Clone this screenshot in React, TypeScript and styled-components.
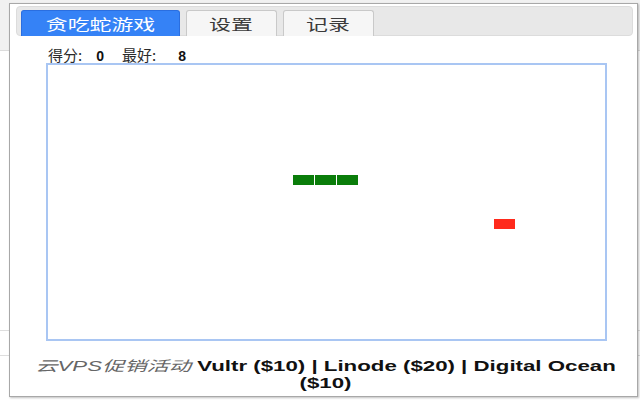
import React, { useState } from "react";
import styled, { createGlobalStyle } from "styled-components";

const Global = createGlobalStyle`
  html, body { margin: 0; padding: 0; }
  body {
    width: 640px;
    height: 400px;
    overflow: hidden;
    font-family: "Liberation Sans", Arial, "Noto Sans CJK SC", sans-serif;
    background: linear-gradient(to bottom, #f1f1f1 0 50px, #dcdcdc 50px 51px, #fff 51px 330px, #dedede 330px 331px, #fff 331px 355px, #dedede 355px 356px, #fff 356px);
  }
`;

const Page = styled.div`
  padding: 3px 0 0 9px;
`;

const Popup = styled.div`
  box-sizing: border-box;
  width: 629px;
  height: 394px;
  background: #fff;
  border: 1px solid #a8a8a8;
  box-shadow: 1px 1px 2px rgba(0, 0, 0, 0.25);
  padding: 2px 3px 0 6px;
  overflow: hidden;
`;

const TabBar = styled.div`
  box-sizing: border-box;
  height: 30px;
  width: 617px;
  background: #e8e8e8;
  border: 1px solid #dcdcdc;
  border-radius: 4px;
  display: flex;
  align-items: flex-end;
  gap: 6px;
  padding: 0 0 0 4px;
`;

const Tab = styled.button<{ $active?: boolean; $w: number }>`
  box-sizing: border-box;
  width: ${(p) => p.$w}px;
  height: 26px;
  margin: 0 0 -1px 0;
  border: 1px solid ${(p) => (p.$active ? "#2a6ee0" : "#c9c9c9")};
  border-bottom: none;
  border-radius: 3px 3px 0 0;
  background: ${(p) => (p.$active ? "#3582f6" : "#f6f6f6")};
  color: ${(p) => (p.$active ? "#fff" : "#3a3a3a")};
  font-family: "Noto Sans CJK SC", sans-serif;
  font-size: 15px;
  line-height: 24px;
  padding: 0;
  cursor: pointer;
  display: flex;
  align-items: center;
  justify-content: center;
`;

const WideText = styled.span<{ $k: number }>`
  display: inline-block;
  transform: scaleX(${(p) => p.$k});
  transform-origin: center;
`;

const Content = styled.div`
  padding: 11px 0 0 30px;
`;

const Score = styled.div`
  display: flex;
  align-items: baseline;
  height: 16px;
  font-family: "Noto Sans CJK SC", sans-serif;
  font-size: 15px;
  line-height: 16px;
  color: #2a2a2a;
  padding-left: 2px;
`;

const Label = styled.span`
  letter-spacing: 0px;
`;

const Num = styled.b<{ $ml: number; $mr?: number }>`
  font-family: "Liberation Sans", Arial, sans-serif;
  font-weight: bold;
  font-size: 14px;
  color: #111;
  margin: 0 ${(p) => p.$mr ?? 0}px 0 ${(p) => p.$ml}px;
`;

const Board = styled.div`
  box-sizing: border-box;
  width: 561px;
  height: 278px;
  border: 2px solid #a9c6f3;
  background: #fff;
  svg { display: block; }
`;

const Footer = styled.div`
  width: 385px;
  margin: 17px auto 0;
  text-align: center;
  font-size: 14px;
  line-height: 17px;
  color: #111;
  transform: scaleX(1.59);
  transform-origin: center;
`;

const Promo = styled.i`
  color: #666;
  font-family: "Liberation Sans", "Noto Sans CJK SC", sans-serif;
  font-size: 14px;
`;

const Links = styled.b`
  font-weight: bold;
`;

const cells = [
  { x: 245, y: 110 },
  { x: 267, y: 110 },
  { x: 289, y: 110 },
];

export default function App() {
  const [tab, setTab] = useState(0);
  const tabs = [
    { label: "贪吃蛇游戏", w: 159 },
    { label: "设置", w: 91 },
    { label: "记录", w: 91 },
  ];
  return (
    <>
      <Global />
      <Page>
        <Popup>
          <TabBar>
            {tabs.map((t, i) => (
              <Tab key={t.label} $w={t.w} $active={tab === i} onClick={() => setTab(i)}>
                <WideText $k={1.46}>{t.label}</WideText>
              </Tab>
            ))}
          </TabBar>
          <Content>
            <Score>
              <Label>得分:</Label>
              <Num $ml={14} $mr={18}>0</Num>
              <Label>最好:</Label>
              <Num $ml={22}>8</Num>
            </Score>
            <Board>
              <svg width="557" height="274" viewBox="0 0 557 274">
                {cells.map((c, i) => (
                  <rect key={i} x={c.x} y={c.y} width={21} height={10} fill="#0a7d0a" />
                ))}
                <rect x={446} y={154} width={21} height={10} fill="#ff2a1c" />
              </svg>
            </Board>
          </Content>
          <Footer>
            <Promo>云VPS促销活动</Promo> <Links>Vultr ($10) | Linode ($20) | Digital Ocean ($10)</Links>
          </Footer>
        </Popup>
      </Page>
    </>
  );
}
